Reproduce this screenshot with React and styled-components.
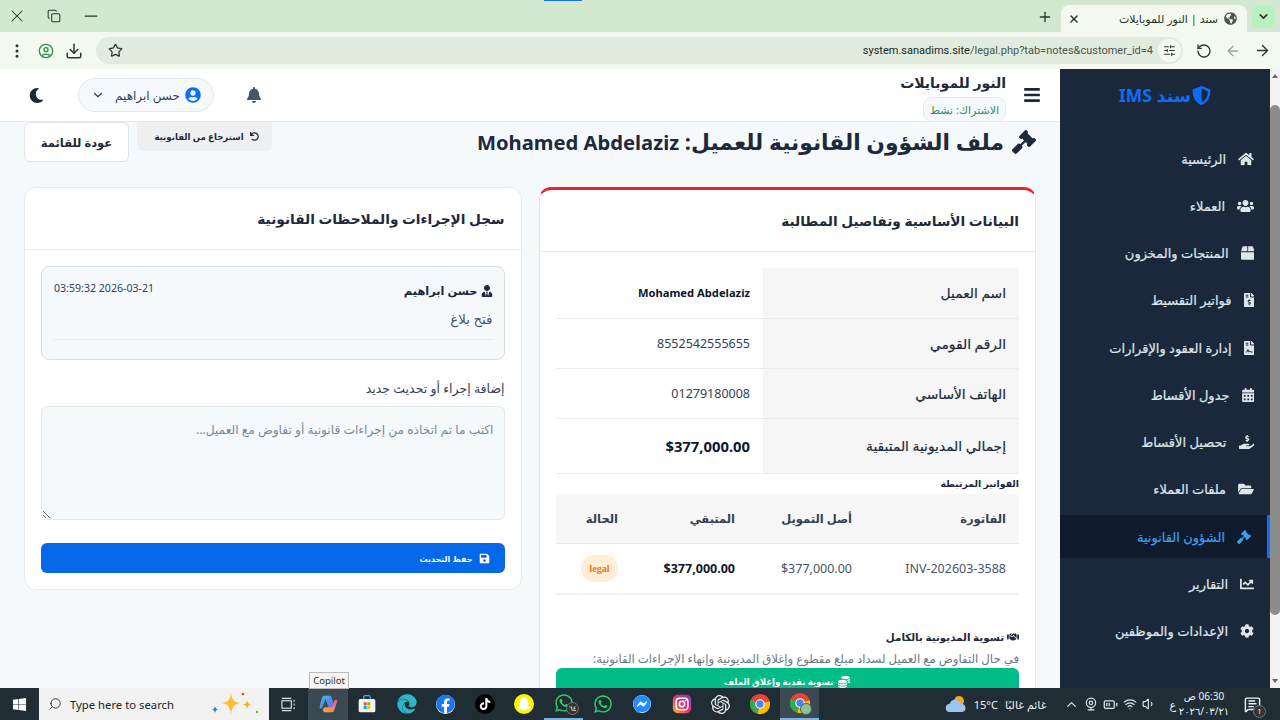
import styled, { createGlobalStyle } from 'styled-components';
import {
  X, Minus, Copy, Plus, ChevronDown, Star, Download, CircleUser, EllipsisVertical,
  RotateCw, ArrowLeft, ArrowRight, SlidersHorizontal, Search, Wifi, Volume1, BatteryMedium, ChevronUp, MessageSquareText, Webcam,
} from 'lucide-react';
import {
  FaHome, FaUsers, FaBox, FaFileInvoiceDollar, FaFileContract, FaCalendarAlt, FaHandHoldingUsd,
  FaFolderOpen, FaGavel, FaChartLine, FaCog, FaBell, FaMoon, FaUserCircle, FaBars, FaUserTie,
  FaHandshake, FaCoins, FaSave, FaUndo, FaShieldAlt, FaGlobeAmericas, FaWindows, FaFacebook,
  FaTiktok, FaSnapchatGhost, FaWhatsapp, FaFacebookMessenger, FaEdge,
} from 'react-icons/fa';
import { SiOpenai } from 'react-icons/si';

const GlobalStyle = createGlobalStyle`
  * { box-sizing: border-box; }
  html, body { margin: 0; height: 100%; overflow: hidden; }
  body { font-family: "Noto Sans", "DejaVu Sans", sans-serif; background: #f6f9fc; color: #1e293b; }
`;

const Screen = styled.div`
  width: 1280px;
  height: 720px;
  display: flex;
  flex-direction: column;
  position: relative;
  overflow: hidden;
`;

/* browser chrome */
const TabStrip = styled.div`
  height: 32px;
  background: #d3e8d1;
  display: flex;
  align-items: flex-end;
  justify-content: space-between;
  color: #27352b;
  position: relative;
`;

const LoadBar = styled.div`
  position: absolute;
  top: 0;
  left: 544px;
  width: 38px;
  height: 1px;
  background: #1a73e8;
`;

const WinControls = styled.div`
  display: flex;
  gap: 20px;
  padding: 0 0 6px 7px;
`;

const TabGroup = styled.div`
  display: flex;
  align-items: flex-end;
`;

const NewTab = styled.div`
  padding: 0 8px 7px 0;
  display: flex;
`;

const Tab = styled.div`
  width: 186px;
  height: 27px;
  background: #f3f9ef;
  border-radius: 8px 8px 0 0;
  display: flex;
  align-items: center;
  justify-content: space-between;
  padding: 0 10px 0 7px;
  font-size: 11px;
`;

const TabTitle = styled.span`
  display: flex;
  align-items: center;
  gap: 6px;
`;

const TabMenu = styled.div`
  width: 23px;
  height: 23px;
  margin: 0 5px 4px 5px;
  background: #b9f0c1;
  border-radius: 7px;
  display: flex;
  align-items: center;
  justify-content: center;
`;

const Toolbar = styled.div`
  height: 37px;
  background: #f3f9ef;
  display: flex;
  align-items: center;
  color: #2b3a30;
`;

const ToolGroup = styled.div`
  display: flex;
  align-items: center;
  justify-content: space-between;
  width: ${(p) => p.$w}px;
  padding: ${(p) => p.$pad};
`;

const Address = styled.div`
  flex: 1;
  height: 27px;
  background: #e1ebde;
  border-radius: 14px;
  display: flex;
  align-items: center;
  justify-content: space-between;
  padding: 0 2px 0 12px;
`;

const Url = styled.span`
  font-family: Roboto, sans-serif;
  font-size: 11px;
  color: #4b564d;
  margin-left: auto;
  margin-right: 5px;
  b { font-weight: 400; color: #1c261f; }
`;

const TuneButton = styled.span`
  width: 23px;
  height: 23px;
  border-radius: 50%;
  background: #f3f9ef;
  display: flex;
  align-items: center;
  justify-content: center;
`;

/* page */
const Viewport = styled.div`
  flex: 1;
  min-height: 0;
  display: flex;
  direction: rtl;
  background: #f6f9fc;
`;

const Scrollbar = styled.div`
  width: 10px;
  background: #f4f4f4;
  display: flex;
  flex-direction: column;
  align-items: center;
  padding: 5px 0 5px;
`;

const ScrollArrow = styled.span`
  width: 0;
  height: 0;
  border-left: 3.5px solid transparent;
  border-right: 3.5px solid transparent;
  border-bottom: ${(p) => (p.$down ? '0' : '4px solid #666')};
  border-top: ${(p) => (p.$down ? '4px solid #666' : '0')};
  margin-top: ${(p) => (p.$down ? 'auto' : '0')};
`;

const Thumb = styled.div`
  width: 10px;
  height: 510px;
  margin-top: 27px;
  background: #8c8c8c;
  border-radius: 5px;
`;

const Sidebar = styled.aside`
  width: 210px;
  background: #1b283b;
  flex-shrink: 0;
  display: flex;
  flex-direction: column;
`;

const Brand = styled.div`
  height: 52px;
  display: flex;
  align-items: center;
  justify-content: center;
  gap: 1px;
  color: #0d6efd;
  font-size: 17.5px;
  font-weight: 700;
`;

const Nav = styled.nav`
  display: flex;
  flex-direction: column;
  gap: 4.25px;
  padding-top: 16px;
`;

const NavItem = styled.a`
  height: 43px;
  display: flex;
  align-items: center;
  gap: 12px;
  padding-right: 16px;
  font-size: 13px;
  -webkit-text-stroke: 0.2px;
  color: ${(p) => (p.$active ? '#3b9fe8' : '#dfe5ec')};
  background: ${(p) => (p.$active ? '#0f1a2c' : 'transparent')};
  border-right: ${(p) => (p.$active ? '3px solid #0d6efd' : '0')};
  svg {
    width: ${(p) => p.$iconWidth}px;
    height: 14px;
    flex-shrink: 0;
  }
`;

const Main = styled.main`
  flex: 1;
  min-width: 0;
  display: flex;
  flex-direction: column;
  overflow: hidden;
`;

const Header = styled.header`
  height: 53px;
  flex-shrink: 0;
  background: #fff;
  border-bottom: 1px solid #e6ebf1;
  display: flex;
  align-items: center;
  justify-content: space-between;
  padding: 0 19px 0 29px;
`;

const HeaderSide = styled.div`
  display: flex;
  align-items: center;
  gap: ${(p) => p.$gap}px;
`;

const Burger = styled(FaBars)`
  width: 18px;
  height: 18px;
  color: #1b283b;
`;

const ShopInfo = styled.div`
  display: flex;
  flex-direction: column;
  align-items: flex-start;
  gap: 4px;
  padding-top: 4px;
`;

const ShopName = styled.div`
  font-size: 14px;
  font-weight: 700;
  color: #1e293b;
  line-height: 20px;
`;

const PlanBadge = styled.div`
  height: 25px;
  padding: 0 6px;
  font-size: 11px;
  line-height: 23px;
  color: #2f8f6b;
  background: #f6f9fc;
  border: 1px solid #e6ebf1;
  border-radius: 9px;
`;

const UserPill = styled.div`
  width: 136px;
  height: 34px;
  border-radius: 17px;
  background: #f6f9fc;
  border: 1px solid #e2e8f0;
  display: flex;
  align-items: center;
  justify-content: space-between;
  padding: 0 12px;
  font-size: 12px;
  color: #334155;
`;

const UserName = styled.span`
  display: flex;
  align-items: center;
  gap: 5px;
  svg { color: #0d6efd; }
`;

const MoonIcon = styled(FaMoon)`
  width: 15px;
  height: 15px;
  color: #1b283b;
  margin-right: 2px;
`;

const Content = styled.div`
  flex: 1;
  min-height: 0;
  padding: 0 24px;
`;

const TitleRow = styled.div`
  height: 65px;
  display: flex;
  justify-content: space-between;
  align-items: flex-start;
`;

const PageTitle = styled.h1`
  margin: 6px 0 0;
  display: flex;
  align-items: center;
  gap: 8px;
  font-size: 21.8px;
  font-weight: 700;
  color: #1e293b;
  line-height: 28px;
  white-space: nowrap;
  svg { width: 24px; height: 24px; }
`;

const TitleName = styled.span`
  font-size: 20.2px;
`;

const Actions = styled.div`
  display: flex;
  gap: 8px;
  align-items: flex-start;
`;

const GreyButton = styled.button`
  width: 135px;
  height: 29px;
  border: 0;
  border-radius: 0 0 6px 6px;
  background: #eef0f2;
  color: #1e293b;
  font: 700 8.6px "Noto Sans", "DejaVu Sans", sans-serif;
  display: flex;
  align-items: center;
  justify-content: center;
  gap: 6px;
  padding: 0 0 0 4px;
`;

const OutlineButton = styled.button`
  width: 105px;
  height: 40px;
  border: 1px solid #dfe5ec;
  border-radius: 6px;
  background: #fff;
  color: #1e293b;
  font: 700 11.5px "Noto Sans", "DejaVu Sans", sans-serif;
`;

const Columns = styled.div`
  display: grid;
  grid-template-columns: 1fr 1fr;
  gap: 17px;
  align-items: start;
`;

const Card = styled.section`
  background: #fff;
  border: 1px solid #e6ebf1;
  border-top: ${(p) => (p.$danger ? '3px solid #e8262d' : '1px solid #e6ebf1')};
  border-radius: 12px;
`;

const CardHead = styled.div`
  height: 62px;
  border-bottom: 1px solid #e6ebf1;
  display: flex;
  align-items: center;
  padding: 0 16px;
  font-size: 13.7px;
  font-weight: 600;
  color: #1e293b;
`;

const CardBody = styled.div`
  padding: 16px;
`;

const InfoTable = styled.table`
  width: 100%;
  border-collapse: collapse;
  color: #334155;
`;

const InfoRow = styled.tr`
  height: ${(p) => (p.$tall ? 55 : 50)}px;
  border-bottom: 1px solid #e8edf2;
`;

const InfoLabel = styled.th`
  width: 256px;
  background: #f6f6f6;
  text-align: right;
  padding: 0 13px;
  font-weight: 400;
  -webkit-text-stroke: 0.2px;
  font-size: 13.8px;
  color: #1e293b;
`;

const InfoValue = styled.td`
  text-align: right;
  padding: 0 13px;
  font-size: ${(p) => p.$size}px;
  font-weight: ${(p) => (p.$strong ? 700 : 400)};
  color: ${(p) => (p.$strong ? '#0f172a' : '#334155')};
`;

const SmallHeading = styled.h3`
  margin: 0;
  font-size: ${(p) => p.$size}px;
  line-height: 20px;
  font-weight: 700;
  color: #1e293b;
  display: flex;
  align-items: center;
  gap: 3px;
`;

const BillTable = styled.table`
  width: 100%;
  table-layout: fixed;
  border-collapse: collapse;
  font-size: 12.5px;
  margin-bottom: 32px;
  th {
    height: 50px;
    background: #f7f7f7;
    text-align: right;
    padding: 0 13px;
    font-size: 11.5px;
    font-weight: 700;
    color: #334155;
    border-bottom: 1px solid #e2e8f0;
  }
  th:nth-child(1) { width: 154px; }
  th:nth-child(2), th:nth-child(3) { width: 117px; }
  td {
    height: 50px;
    padding: 0 13px;
    text-align: right;
    color: #475569;
    border-bottom: 2px solid #eef2f6;
  }
`;

const StrongCell = styled.td`
  && { font-weight: 700; color: #0f172a; }
`;

const Legal = styled.span`
  display: inline-block;
  vertical-align: middle;
  width: 37px;
  height: 27px;
  border-radius: 14px;
  background: #ffedd5;
  color: #f97316;
  font: 700 10px/27px "Liberation Serif", serif;
  text-align: center;
`;

const Hint = styled.p`
  margin: 2px 0 0;
  font-size: 11.7px;
  line-height: 18px;
  color: #6b7785;
  white-space: nowrap;
`;

const SettleButton = styled.button`
  width: 100%;
  height: 40px;
  margin-top: 1px;
  border: 0;
  border-radius: 6px 6px 0 0;
  background: #00bc87;
  color: #fff;
  font: 700 8.6px "Noto Sans", "DejaVu Sans", sans-serif;
  display: flex;
  justify-content: center;
  gap: 5px;
  padding-top: 8px;
`;

const NoteBox = styled.div`
  height: 94px;
  background: #f6f9fc;
  border: 1px solid #d6dfe8;
  border-radius: 8px;
  padding: 12px 11px 12px 12px;
`;

const NoteTop = styled.div`
  display: flex;
  justify-content: space-between;
  align-items: flex-start;
`;

const NoteAuthor = styled.div`
  display: flex;
  align-items: center;
  gap: 3px;
  font-size: 11.4px;
  font-weight: 600;
  color: #1e293b;
  line-height: 24px;
`;

const NoteDate = styled.time`
  font-size: 10.6px;
  color: #334155;
  line-height: 18px;
`;

const NoteText = styled.div`
  font-size: 13.4px;
  line-height: 20px;
  margin-top: 6px;
  padding-bottom: 10px;
  color: #475569;
  border-bottom: 1px solid #e6ebf1;
`;

const FieldLabel = styled.label`
  display: block;
  margin: 19px 0 7px;
  font-size: 12.5px;
  line-height: 20px;
  color: #334155;
`;

const NoteInput = styled.textarea`
  display: block;
  width: 100%;
  height: 114px;
  padding: 14px 10px;
  background: #f6f9fc;
  border: 1px solid #e2e8f0;
  border-radius: 6px;
  font: 12.2px "Noto Sans", "DejaVu Sans", sans-serif;
  &::placeholder { color: #7c8794; }
`;

const SaveButton = styled.button`
  width: 100%;
  height: 30px;
  margin-top: 23px;
  border: 0;
  border-radius: 6px;
  background: #0468e8;
  color: #fff;
  font: 700 8px "Noto Sans", "DejaVu Sans", sans-serif;
  display: flex;
  align-items: center;
  justify-content: flex-start;
  gap: 6px;
  padding: 0 15px;
`;

/* windows taskbar */
const Taskbar = styled.div`
  height: 32px;
  flex-shrink: 0;
  background: #202d35;
  display: flex;
  align-items: center;
  color: #eef2f4;
`;

const StartButton = styled.div`
  width: 39px;
  display: flex;
  justify-content: center;
`;

const SearchBox = styled.div`
  width: 230px;
  height: 32px;
  background: #f2f2f2;
  display: flex;
  align-items: center;
  gap: 8px;
  padding-left: 9px;
  color: #222;
  font: 11.3px "Noto Sans", sans-serif;
`;

const Sparkle = styled.svg`
  margin-left: auto;
  margin-right: 8px;
`;

const TaskIcons = styled.div`
  display: flex;
`;

const TaskCell = styled.div`
  width: 39.3px;
  height: 32px;
  display: flex;
  align-items: center;
  justify-content: center;
  position: relative;
  background: ${(p) => (p.$active ? '#3b4a52' : 'transparent')};
  border-bottom: ${(p) => (p.$open ? '2px solid #7fb2dc' : '0')};
`;

const RoundIcon = styled.span`
  width: ${(p) => p.$size}px;
  height: ${(p) => p.$size}px;
  border-radius: 50%;
  background: ${(p) => p.$bg};
  display: flex;
  align-items: center;
  justify-content: center;
`;

const Count = styled.span`
  position: absolute;
  right: 4px;
  bottom: 3px;
  width: 13px;
  height: 13px;
  border-radius: 50%;
  background: #333;
  border: 1px solid #777;
  color: #fff;
  font-size: 7px;
  line-height: 11px;
  text-align: center;
`;

const ProfileDot = styled.span`
  position: absolute;
  right: 7px;
  bottom: 3px;
  width: 12px;
  height: 12px;
  border-radius: 50%;
  background: #8fbf94;
  border: 1px solid #3e6a48;
`;

const Tray = styled.div`
  margin-left: auto;
  display: flex;
  align-items: center;
  padding-right: 19px;
  font-size: 11px;
`;

const Weather = styled.div`
  display: flex;
  align-items: center;
  gap: 7px;
  margin-right: 18px;
`;

const TrayIcons = styled.div`
  display: flex;
  align-items: center;
  gap: 5px;
  color: #dfe5e8;
  margin-right: 13px;
`;

const Clock = styled.div`
  width: 56px;
  text-align: center;
  font-size: 10px;
  line-height: 15px;
  margin-right: 12px;
`;

const Notification = styled.div`
  display: flex;
  position: relative;
`;

const NotifyCount = styled(Count)`
  right: -5px;
  bottom: -5px;
`;

const Tooltip = styled.div`
  position: absolute;
  left: 309px;
  top: 672px;
  width: 40px;
  height: 17px;
  background: #f5f5f5;
  border: 1px solid #bbb;
  color: #333;
  text-align: center;
  font: 9.5px/15px "Noto Sans", sans-serif;
`;

const navItems = [
  [FaHome, 'الرئيسية', 16],
  [FaUsers, 'العملاء', 17],
  [FaBox, 'المنتجات والمخزون', 13.5],
  [FaFileInvoiceDollar, 'فواتير التقسيط', 10.5],
  [FaFileContract, 'إدارة العقود والإقرارات', 10.5],
  [FaCalendarAlt, 'جدول الأقساط', 12.5],
  [FaHandHoldingUsd, 'تحصيل الأقساط', 15.5],
  [FaFolderOpen, 'ملفات العملاء', 16],
  [FaGavel, 'الشؤون القانونية', 14, true],
  [FaChartLine, 'التقارير', 14],
  [FaCog, 'الإعدادات والموظفين', 14],
];

function ChromeLogo({ size = 22 }) {
  return (
    <svg width={size} height={size} viewBox="0 0 24 24">
      <circle cx="12" cy="12" r="11" fill="#ea4335" />
      <path d="M12 12 L22.5 9 A11 11 0 0 1 9 22.6 Z" fill="#fbbc04" />
      <path d="M12 12 L9 22.6 A11 11 0 0 1 2.2 7 Z" fill="#34a853" />
      <circle cx="12" cy="12" r="5.2" fill="#fff" />
      <circle cx="12" cy="12" r="4" fill="#4285f4" />
    </svg>
  );
}

function CopilotLogo() {
  return (
    <svg width="20" height="20" viewBox="0 0 24 24">
      <defs>
        <linearGradient id="cpA" x1="0" y1="0" x2="1" y2="1">
          <stop offset="0" stopColor="#2fc4e8" />
          <stop offset="1" stopColor="#7a5cf0" />
        </linearGradient>
        <linearGradient id="cpB" x1="0" y1="1" x2="1" y2="0">
          <stop offset="0" stopColor="#f6b02c" />
          <stop offset="1" stopColor="#ee5a8a" />
        </linearGradient>
      </defs>
      <path d="M8 2h6c1 0 1.600.6 2 1.600L20 14c.5 1.500-.4 3-2 3h-5L9 6 6 14c-1 3-2 4-4 3 0-3 2-10 3-13 .4-1.300 1.500-2 3-2z" fill="url(#cpA)" />
      <path d="M7 22h9c2 0 3-.7 3.600-2.500L23 9c.4-1.500-.6-2.500-2-2-1 .4-1.500 1.200-2 3l-2 6H9c-2 0-4 2-2 6z" fill="url(#cpB)" />
    </svg>
  );
}

function StoreLogo() {
  return (
    <svg width="20" height="20" viewBox="0 0 24 24">
      <path d="M8 6V4a2 2 0 0 1 2-2h4a2 2 0 0 1 2 2v2" fill="none" stroke="#3ab0e6" strokeWidth="1.600" />
      <rect x="2" y="6" width="20" height="16" rx="2" fill="#f3f3f3" />
      <rect x="8" y="10" width="3.600" height="3.600" fill="#f25022" />
      <rect x="12.400" y="10" width="3.600" height="3.600" fill="#7fba00" />
      <rect x="8" y="14.400" width="3.600" height="3.600" fill="#00a4ef" />
      <rect x="12.400" y="14.400" width="3.600" height="3.600" fill="#ffb900" />
    </svg>
  );
}

function InstaLogo() {
  return (
    <svg width="20" height="20" viewBox="0 0 24 24">
      <defs>
        <linearGradient id="ig" x1="0" y1="1" x2="1" y2="0">
          <stop offset="0" stopColor="#fdb131" />
          <stop offset=".5" stopColor="#e8336f" />
          <stop offset="1" stopColor="#7a3fd0" />
        </linearGradient>
      </defs>
      <rect x="1" y="1" width="22" height="22" rx="6" fill="url(#ig)" />
      <rect x="5" y="5" width="14" height="14" rx="4" fill="none" stroke="#fff" strokeWidth="1.800" />
      <circle cx="12" cy="12" r="3.200" fill="none" stroke="#fff" strokeWidth="1.800" />
      <circle cx="16.200" cy="7.800" r="1" fill="#fff" />
    </svg>
  );
}

function App() {
  return (
    <Screen>
      <GlobalStyle />
      <TabStrip>
        <LoadBar />
        <WinControls>
          <X size={20} strokeWidth={1.25} />
          <Copy size={14} strokeWidth={1.75} style={{ marginTop: 3 }} />
          <Minus size={20} strokeWidth={1.5} />
        </WinControls>
        <TabGroup>
          <NewTab><Plus size={16} strokeWidth={2} /></NewTab>
          <Tab dir="rtl">
            <TabTitle><FaGlobeAmericas size={13} color="#4a5a50" />سند | النور للموبايلات</TabTitle>
            <X size={12} strokeWidth={3} />
          </Tab>
          <TabMenu><ChevronDown size={13} strokeWidth={3} /></TabMenu>
        </TabGroup>
      </TabStrip>

      <Toolbar>
        <ToolGroup $w={96} $pad="0 13px 0 8px">
          <EllipsisVertical size={18} />
          <CircleUser size={16} color="#2f8f4e" />
          <Download size={18} />
        </ToolGroup>
        <Address>
          <Star size={15} />
          <Url><b>system.sanadims.site</b>/legal.php?tab=notes&customer_id=4</Url>
          <TuneButton><SlidersHorizontal size={13} /></TuneButton>
        </Address>
        <ToolGroup $w={97} $pad="0 9px 0 13px">
          <RotateCw size={16} style={{ transform: 'scaleX(-1)' }} />
          <ArrowLeft size={16} color="#9aa69d" />
          <ArrowRight size={17} />
        </ToolGroup>
      </Toolbar>

      <Viewport>
        <Scrollbar>
          <ScrollArrow />
          <Thumb />
          <ScrollArrow $down />
        </Scrollbar>
        <Sidebar>
          <Brand><FaShieldAlt size={19} />سند IMS</Brand>
          <Nav>
            {navItems.map(([Icon, label, width, active]) => (
              <NavItem key={label} $active={active} $iconWidth={width}><Icon />{label}</NavItem>
            ))}
          </Nav>
        </Sidebar>
        <Main>
          <Header>
            <HeaderSide $gap={17}>
              <Burger />
              <ShopInfo>
                <ShopName>النور للموبايلات</ShopName>
                <PlanBadge>الاشتراك: نشط</PlanBadge>
              </ShopInfo>
            </HeaderSide>
            <HeaderSide $gap={32}>
              <FaBell size={16} color="#475569" />
              <UserPill>
                <UserName><FaUserCircle size={16} />حسن ابراهيم</UserName>
                <ChevronDown size={14} color="#334155" />
              </UserPill>
              <MoonIcon />
            </HeaderSide>
          </Header>
          <Content>
            <TitleRow>
              <PageTitle><FaGavel /><span>ملف الشؤون القانونية للعميل: <TitleName>Mohamed Abdelaziz</TitleName></span></PageTitle>
              <Actions>
                <GreyButton><FaUndo size={9} />استرجاع من القانونية</GreyButton>
                <OutlineButton>عودة للقائمة</OutlineButton>
              </Actions>
            </TitleRow>
            <Columns>
              <Card $danger>
                <CardHead>البيانات الأساسية وتفاصيل المطالبة</CardHead>
                <CardBody>
                  <InfoTable>
                    <tbody>
                      <InfoRow><InfoLabel>اسم العميل</InfoLabel><InfoValue $strong $size={11.2}>Mohamed Abdelaziz</InfoValue></InfoRow>
                      <InfoRow><InfoLabel>الرقم القومي</InfoLabel><InfoValue $size={12.5}>8552542555655</InfoValue></InfoRow>
                      <InfoRow><InfoLabel>الهاتف الأساسي</InfoLabel><InfoValue $size={12.5}>01279180008</InfoValue></InfoRow>
                      <InfoRow $tall><InfoLabel>إجمالي المديونية المتبقية</InfoLabel><InfoValue $strong $size={14.8}>$377,000.00</InfoValue></InfoRow>
                    </tbody>
                  </InfoTable>
                  <SmallHeading $size={9.3}>الفواتير المرتبطة</SmallHeading>
                  <BillTable>
                    <thead>
                      <tr><th>الفاتورة</th><th>أصل التمويل</th><th>المتبقي</th><th>الحالة</th></tr>
                    </thead>
                    <tbody>
                      <tr>
                        <td>INV-202603-3588</td>
                        <td>$377,000.00</td>
                        <StrongCell>$377,000.00</StrongCell>
                        <td><Legal>legal</Legal></td>
                      </tr>
                    </tbody>
                  </BillTable>
                  <SmallHeading $size={10.3}><FaHandshake size={12} />تسوية المديونية بالكامل</SmallHeading>
                  <Hint>في حال التفاوض مع العميل لسداد مبلغ مقطوع وإغلاق المديونية وإنهاء الإجراءات القانونية:</Hint>
                  <SettleButton><FaCoins size={12} />تسوية نقدية وإغلاق الملف</SettleButton>
                </CardBody>
              </Card>
              <Card>
                <CardHead>سجل الإجراءات والملاحظات القانونية</CardHead>
                <CardBody>
                  <NoteBox>
                    <NoteTop>
                      <NoteAuthor><FaUserTie size={12} />حسن ابراهيم</NoteAuthor>
                      <NoteDate>2026-03-21 03:59:32</NoteDate>
                    </NoteTop>
                    <NoteText>فتح بلاغ</NoteText>
                  </NoteBox>
                  <FieldLabel>إضافة إجراء أو تحديث جديد</FieldLabel>
                  <NoteInput placeholder="اكتب ما تم اتخاذه من إجراءات قانونية أو تفاوض مع العميل..." />
                  <SaveButton><FaSave size={11} />حفظ التحديث</SaveButton>
                </CardBody>
              </Card>
            </Columns>
          </Content>
        </Main>
      </Viewport>

      <Taskbar>
        <StartButton><FaWindows size={15} color="#fff" /></StartButton>
        <SearchBox>
          <Search size={14} strokeWidth={1.5} style={{ transform: 'scaleX(-1)' }} />
          Type here to search
          <Sparkle width="50" height="26" viewBox="0 0 50 26">
            <path d="M20 2 C21 9 23 11 29 12 C23 13 21 16 20 23 C19 16 17 13 11 12 C17 11 19 9 20 2Z" fill="#fbc02d" />
            <path d="M36 9 C36.500 12 37.500 13 40 13.500 C37.500 14 36.500 15 36 18 C35.500 15 34.500 14 32 13.500 C34.500 13 35.500 12 36 9Z" fill="#f9a825" />
            <path d="M4 15 C4.500 17 5 18 7 18.500 C5 19 4.500 20 4 22 C3.500 20 3 19 1 18.500 C3 18 3.500 17 4 15Z" fill="#1e88e5" />
            <circle cx="32" cy="3" r="1.300" fill="#e64a19" />
            <circle cx="46" cy="21" r="1.300" fill="#7cb342" />
          </Sparkle>
        </SearchBox>
        <TaskIcons>
          <TaskCell><svg width="15" height="15" viewBox="0 0 16 16" fill="none" stroke="#dfe5e8" strokeWidth="1.200"><rect x="1" y="4" width="10" height="8" /><path d="M1 1.500h10M1 14.500h10M14 3v2M14 7v2M14 11v2" /></svg></TaskCell>
          <TaskCell $active><CopilotLogo /></TaskCell>
          <TaskCell><StoreLogo /></TaskCell>
          <TaskCell><FaEdge size={20} color="#2fb5c9" /></TaskCell>
          <TaskCell><RoundIcon $size={19} $bg="#fff"><FaFacebook size={20} color="#1877f2" /></RoundIcon></TaskCell>
          <TaskCell><RoundIcon $size={20} $bg="#000"><FaTiktok size={12} color="#fff" /></RoundIcon></TaskCell>
          <TaskCell><RoundIcon $size={20} $bg="#fff200"><FaSnapchatGhost size={14} color="#fff" /></RoundIcon></TaskCell>
          <TaskCell $open><FaWhatsapp size={20} color="#25d366" /><Count>٦٤</Count></TaskCell>
          <TaskCell><FaWhatsapp size={20} color="#25d366" /></TaskCell>
          <TaskCell><RoundIcon $size={18} $bg="#fff"><FaFacebookMessenger size={20} color="#1f8cff" /></RoundIcon></TaskCell>
          <TaskCell><InstaLogo /></TaskCell>
          <TaskCell><SiOpenai size={19} color="#f0f0f0" /></TaskCell>
          <TaskCell><ChromeLogo /></TaskCell>
          <TaskCell $active $open><ChromeLogo /><ProfileDot /></TaskCell>
        </TaskIcons>
        <Tray>
          <Weather>
            <svg width="22" height="18" viewBox="0 0 22 18"><circle cx="14" cy="6" r="5" fill="#f5a623" /><path d="M5 17a4 4 0 0 1-.5-8A6 6 0 0 1 16 9a4 4 0 0 1 1 8z" fill="#9fc5ee" /></svg>
            <span>15°C</span>
            <span dir="rtl">غائم غالبًا</span>
          </Weather>
          <TrayIcons>
            <ChevronUp size={15} />
            <Webcam size={14} />
            <BatteryMedium size={15} />
            <Wifi size={14} />
            <Volume1 size={14} />
          </TrayIcons>
          <span>ع</span>
          <Clock>
            <div dir="rtl">06:30 ص</div>
            <div>٢٠٢٦/٠٣/٢١</div>
          </Clock>
          <Notification><MessageSquareText size={17} /><NotifyCount>1</NotifyCount></Notification>
        </Tray>
      </Taskbar>
      <Tooltip>Copilot</Tooltip>
    </Screen>
  );
}

export default App;
